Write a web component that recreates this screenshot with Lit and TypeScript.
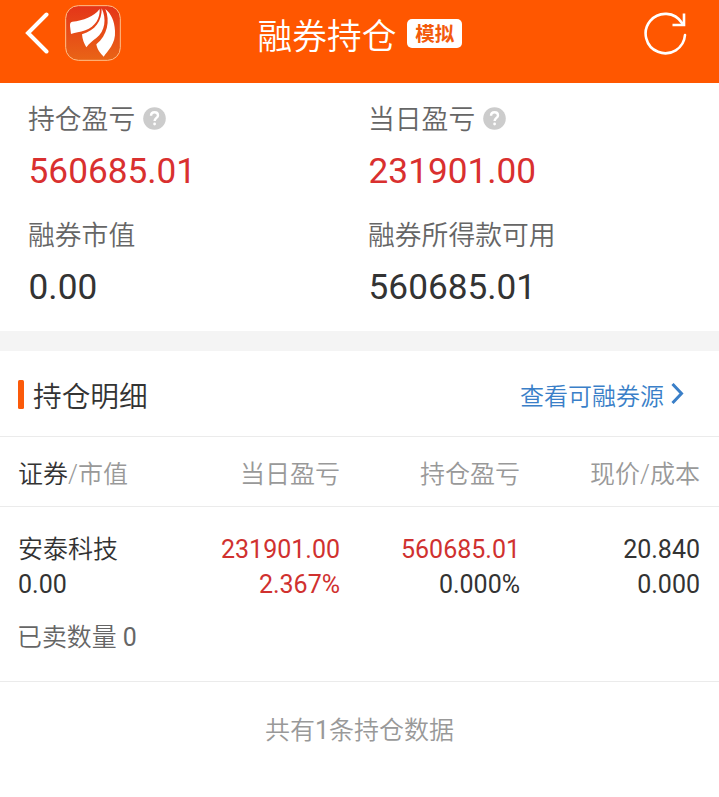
import { LitElement, html, css } from "lit";
import { customElement } from "lit/decorators.js";

interface Metric {
  label: string;
  value: string;
  help?: boolean;
  up?: boolean;
}

const METRICS: Metric[] = [
  { label: "持仓盈亏", value: "560685.01", help: true, up: true },
  { label: "当日盈亏", value: "231901.00", help: true, up: true },
  { label: "融券市值", value: "0.00" },
  { label: "融券所得款可用", value: "560685.01" },
];

@customElement("app-header")
class AppHeader extends LitElement {
  static styles = css`
    :host {
      display: grid;
      grid-template-columns: 1fr auto 1fr;
      align-items: center;
      box-sizing: border-box;
      height: 83px;
      padding: 0 32px 17px 25px;
      background: #ff5700;
      color: #fff;
    }
    svg { display: block; }
    .left { display: flex; align-items: center; gap: 15px; }
    .center { display: flex; align-items: center; gap: 11px; padding: 8px 0 0 8px; }
    .right { display: flex; justify-content: flex-end; }
    .title { font-size: 34.7px; line-height: 48px; }
    .badge {
      width: 55px;
      height: 29px;
      margin-top: -7px;
      border-radius: 5px;
      background: #fff;
      color: #f35a0c;
      font-size: 19.5px;
      font-weight: 700;
      line-height: 31px;
      text-align: center;
    }
  `;
  render() {
    return html`
      <div class="left">
        <svg width="25" height="42" viewBox="0 0 25 42" fill="none" stroke="#fff" stroke-width="4" stroke-linecap="round">
          <path d="M21.5 2.5 3 21 21.5 39.5" />
        </svg>
        <svg width="56" height="56" viewBox="195 15 168 168">
          <defs>
            <linearGradient id="g" x1="0" y1="0" x2="0" y2="1">
              <stop offset="0" stop-color="#e43519" />
              <stop offset="1" stop-color="#e96416" />
            </linearGradient>
          </defs>
          <rect x="197" y="17" width="164" height="164" rx="38" fill="url(#g)" stroke="#ffc08a" stroke-width="3" />
          <g fill="#fff">
            <path d="M299 27C282 50 250 62 217 65C211 66 210 70 210 78L213 102C226 97 240 97 256 91C286 80 301 54 299 27Z" />
            <path d="M305 25C306 62 286 92 246 103C247 118 252 130 259 142C268 130 278 122 289 114C316 94 320 56 305 25Z" />
            <path d="M316 27C331 62 322 106 289 133C291 148 301 160 311 170C322 153 348 132 345 92C343 62 334 42 316 27Z" />
          </g>
        </svg>
      </div>
      <div class="center">
        <span class="title">融券持仓</span>
        <span class="badge">模拟</span>
      </div>
      <div class="right">
        <svg width="44" height="44" viewBox="-0.5 -0.5 44 44" fill="none" stroke="#fff" stroke-width="2.6">
          <path d="M41.5 23.5A19.7 19.7 0 1 1 38.5 11.5" stroke-linecap="round" />
          <path d="M40.5 2V13.5H29" />
        </svg>
      </div>
    `;
  }
}

@customElement("metric-cell")
class MetricCell extends LitElement {
  static properties = { metric: { attribute: false } };
  declare metric: Metric;
  static styles = css`
    .label { display: flex; align-items: center; gap: 7.5px; height: 40px; font-size: 26.8px; line-height: 38px; color: #666; }
    .text { padding-top: 2px; }
    .value { padding-left: 0.6px; font-size: 35.2px; font-weight: 400; line-height: 64px; color: #333; }
    .up { color: #d9302f; }
    svg { display: block; margin-top: -2px; }
  `;
  render() {
    const m = this.metric;
    return html`
      <div class="label">
        <span class="text">${m.label}</span>
        ${m.help
          ? html`<svg width="23" height="23" viewBox="0 0 23 23" fill="none">
              <circle cx="11.5" cy="11.5" r="11.3" fill="#ccc" />
              <path d="M8 8.8C8 6.6 9.5 5.3 11.5 5.3S15 6.6 15 8.5C15 10.8 11.6 11.2 11.6 14" stroke="#fff" stroke-width="2.4" />
              <circle cx="11.6" cy="17" r="1.4" fill="#fff" />
            </svg>`
          : ""}
      </div>
      <div class="value ${m.up ? "up" : ""}">${m.value}</div>
    `;
  }
}

@customElement("app-root")
class AppRoot extends LitElement {
  static styles = css`
    :host {
      display: block;
      min-height: 797px;
      background: #fff;
      color: #333;
      font-family: Roboto, "Noto Sans CJK SC", sans-serif;
      font-weight: 350;
    }
    .summary {
      display: grid;
      grid-template-columns: 340px 1fr;
      row-gap: 12px;
      box-sizing: border-box;
      height: 248px;
      padding: 16px 28px 0;
      align-content: start;
    }
    .divider { height: 20px; background: #f4f4f4; }
    .section {
      display: flex;
      align-items: center;
      height: 85px;
      padding: 0 35px 0 18px;
      border-bottom: 1px solid #ebebeb;
    }
    .bar { width: 6px; height: 29px; margin: 2px 9px 0 0; border-radius: 1.5px; background: #fb5a0a; }
    .heading { flex: 1; padding-top: 7px; font-size: 28.7px; line-height: 40px; }
    .link { display: flex; align-items: center; gap: 7px; padding-top: 6px; color: #3a7fc8; font-size: 24px; line-height: 36px; }
    .link svg { display: block; margin-top: -7px; }
    .row { display: grid; grid-template-columns: 142px 180px 180px 180px; padding: 0 19px 0 18px; font-size: 25px; }
    .row > :not(:nth-child(4n + 1)) { text-align: right; }
    .head { height: 63px; padding-top: 6px; line-height: 63px; color: #999; border-bottom: 1px solid #ebebeb; }
    .dark { color: #333; }
    .position { height: 174px; border-bottom: 1px solid #ebebeb; }
    .data { padding-top: 25px; line-height: 35px; }
    .num { font-weight: 400; }
    .up { color: #d0312f; }
    .sold { padding: 18px 18px 0 17px; font-size: 24.9px; line-height: 36px; color: #666; }
    .footer { padding-top: 31px; text-align: center; font-size: 25px; line-height: 36px; color: #999; }
  `;
  render() {
    return html`
      <app-header></app-header>
      <div class="summary">${METRICS.map((m) => html`<metric-cell .metric=${m}></metric-cell>`)}</div>
      <div class="divider"></div>
      <div class="section">
        <span class="bar"></span>
        <span class="heading">持仓明细</span>
        <span class="link">
          <span>查看可融券源</span>
          <svg width="13" height="21" viewBox="0 0 13 21" fill="none" stroke="#3a7fc8" stroke-width="3">
            <path d="M1.5 1 10.5 10.5 1.5 20" />
          </svg>
        </span>
      </div>
      <div class="row head">
        <span><span class="dark">证券</span>/市值</span>
        <span>当日盈亏</span>
        <span>持仓盈亏</span>
        <span>现价/成本</span>
      </div>
      <div class="position">
        <div class="row data">
          <span>安泰科技</span>
          <span class="num up">231901.00</span>
          <span class="num up">560685.01</span>
          <span class="num">20.840</span>
          <span class="num">0.00</span>
          <span class="num up">2.367%</span>
          <span class="num">0.000%</span>
          <span class="num">0.000</span>
        </div>
        <div class="sold">已卖数量 <span class="num">0</span></div>
      </div>
      <div class="footer">共有<span class="num">1</span>条持仓数据</div>
    `;
  }
}
